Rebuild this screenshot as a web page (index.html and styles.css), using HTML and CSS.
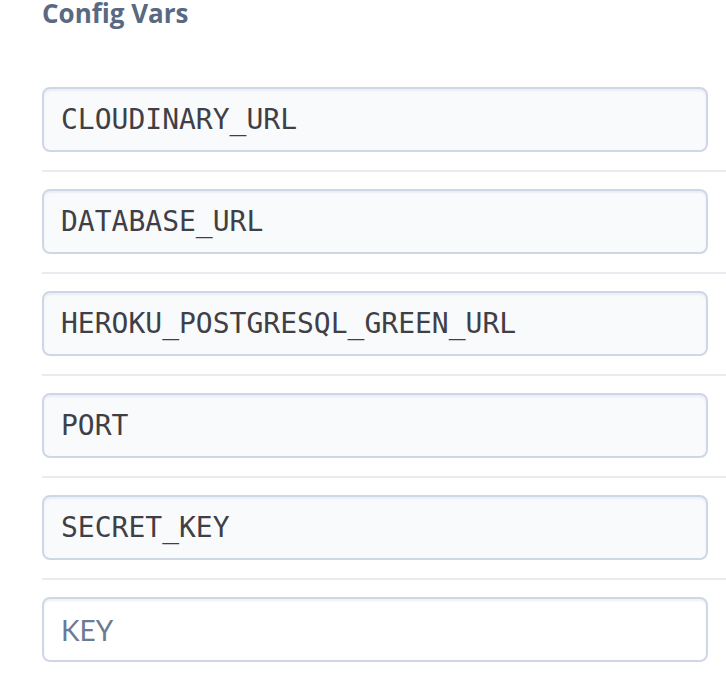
FILE: index.html
```html
<!DOCTYPE html>
<html>
<head>
<meta charset="utf-8">
<link rel="stylesheet" href="styles.css">
</head>
<body>
<div class="panel">
  <h2 class="title">Config Vars</h2>
  <div class="vars">
    <div class="row"><div class="field filled">CLOUDINARY_URL</div></div>
    <div class="row"><div class="field filled">DATABASE_URL</div></div>
    <div class="row"><div class="field filled">HEROKU_POSTGRESQL_GREEN_URL</div></div>
    <div class="row"><div class="field filled">PORT</div></div>
    <div class="row"><div class="field filled">SECRET_KEY</div></div>
    <div class="row last"><div class="field empty">KEY</div></div>
  </div>
</div>
</body>
</html>
```
FILE: styles.css
```css
html, body { margin: 0; padding: 0; background: #fff; }
.panel { padding-left: 42px; }
.title {
  margin: 0;
  height: 30px;
  font-family: "Open Sans", Lato, sans-serif;
  font-weight: 700;
  font-size: 26px;
  line-height: 27px;
  color: #596981;
}
.vars { margin-top: 39px; }
.row {
  padding: 17px 0 18px 0;
  border-bottom: 2px solid #e9ebf1;
}
.row:first-child { padding-top: 18px; }
.row.last { border-bottom: none; }
.field {
  box-sizing: border-box;
  width: 666px;
  height: 65px;
  border: 2px solid #cfd7e6;
  border-radius: 8px;
  padding-left: 17px;
  display: flex;
  align-items: center;
  font-size: 28px;
  box-shadow: inset 0 2px 2px rgba(207, 215, 230, 0.35);
}
.filled {
  background: #f9fafc;
  font-family: "DejaVu Sans Mono", monospace;
  color: #3f4046;
}
.empty {
  background: #fff;
  font-family: Lato, sans-serif;
  color: #6b7a95;
}
```
